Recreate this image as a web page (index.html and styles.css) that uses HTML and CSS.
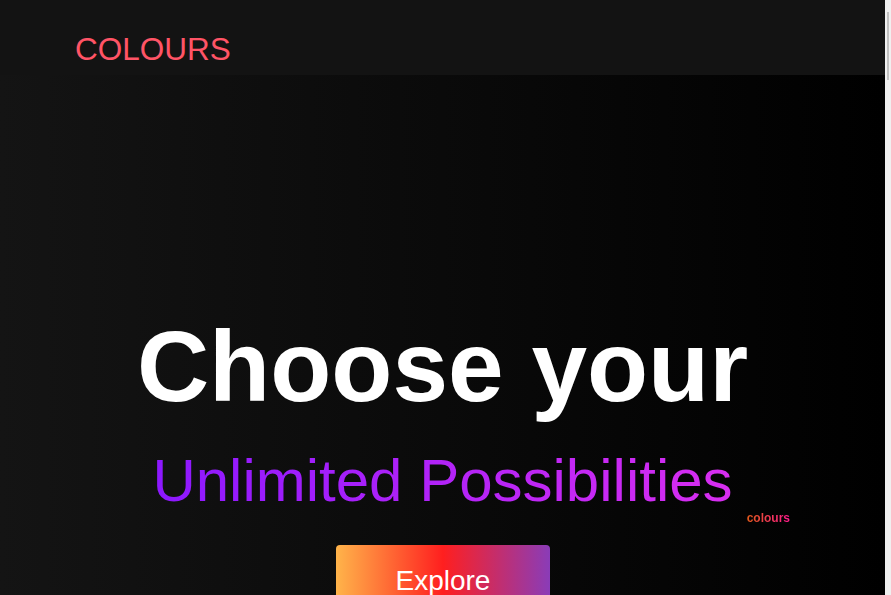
FILE: index.html
```html
<!DOCTYPE html>
<html lang="en">
<head>
<meta charset="utf-8">
<title>Colours</title>
<link rel="stylesheet" href="styles.css">
</head>
<body>
<div class="page">
  <header class="topbar">
    <div class="logo">COLOURS</div>
  </header>
  <main class="hero">
    <h1 class="headline">Choose your</h1>
    <p class="subtitle"><span class="subtitle-text">Unlimited Possibilities</span></p>
    <div class="tagline"><span class="tagline-text">colours</span></div>
    <div class="actions"><button class="explore">Explore</button></div>
  </main>
</div>
<div class="scrollbar" aria-hidden="true"><div class="scrollbar-thumb"></div></div>
</body>
</html>
```

FILE: styles.css
```css
html, body {
  margin: 0;
  padding: 0;
}
body {
  font-family: "Liberation Sans", Arial, sans-serif;
  background: #000;
  overflow-x: hidden;
}
.page {
  margin-right: 6px;
}
.scrollbar {
  position: fixed;
  top: 0;
  right: 0;
  width: 6px;
  height: 100vh;
  background: #f0f0f0;
  padding: 12px 2px 0;
  box-sizing: border-box;
}
.scrollbar-thumb {
  height: 68px;
  background: #c1c1c1;
}
.topbar {
  height: 75px;
  background: #131313;
  padding-left: 75px;
  padding-top: 32px;
  box-sizing: border-box;
}
.logo {
  font-size: 31.5px;
  line-height: 34px;
  color: #ff5466;
}
.hero {
  background: linear-gradient(to right, #141414, #000);
  min-height: 900px;
  padding-top: 234px;
  box-sizing: border-box;
  text-align: center;
}
.headline {
  margin: 0;
  font-size: 100px;
  line-height: 115px;
  font-weight: bold;
  color: #fff;
}
.subtitle {
  margin: 22px 0 0;
  font-size: 60px;
  line-height: 69px;
}
.subtitle-text {
  background: linear-gradient(to right, #8c18ff, #d82ef0);
  -webkit-background-clip: text;
  background-clip: text;
  color: transparent;
}
.tagline {
  margin-top: -4px;
  text-align: right;
  padding-right: 95px;
  font-size: 12px;
  line-height: 14px;
  font-weight: bold;
}
.tagline-text {
  background: linear-gradient(to right, #e0581a, #ff1a8c);
  -webkit-background-clip: text;
  background-clip: text;
  color: transparent;
}
.actions {
  margin-top: 20px;
  display: flex;
  justify-content: center;
}
.explore {
  font-family: "Liberation Sans", Arial, sans-serif;
  font-size: 28px;
  line-height: 32px;
  color: #fff;
  border: none;
  border-radius: 4px;
  padding: 20px 60px;
  width: 214px;
  background: linear-gradient(to right, #ffb44a, #ff1f1f 50%, #8a3cb8);
  cursor: pointer;
}
```
